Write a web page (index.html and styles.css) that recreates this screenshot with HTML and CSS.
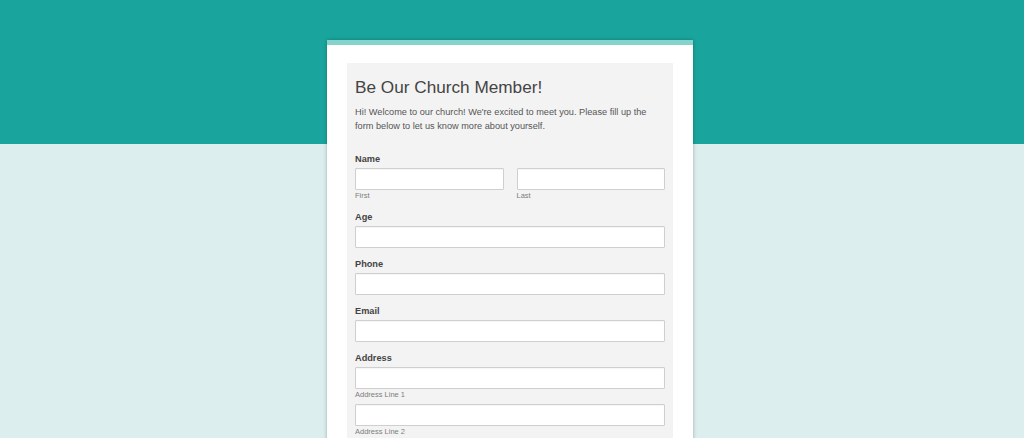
FILE: index.html
```html
<!DOCTYPE html>
<html>
<head>
<meta charset="utf-8">
<link rel="stylesheet" href="styles.css">
</head>
<body>
<div class="page">
  <div class="card">
    <form class="panel">
      <h1 class="title">Be Our Church Member!</h1>
      <p class="intro">Hi! Welcome to our church! We're excited to meet you. Please fill up the form below to let us know more about yourself.</p>

      <div class="field">
        <label class="label">Name</label>
        <div class="row">
          <div class="col">
            <input class="input" type="text">
            <span class="sub">First</span>
          </div>
          <div class="col">
            <input class="input" type="text">
            <span class="sub">Last</span>
          </div>
        </div>
      </div>

      <div class="field">
        <label class="label">Age</label>
        <input class="input" type="text">
      </div>

      <div class="field">
        <label class="label">Phone</label>
        <input class="input" type="text">
      </div>

      <div class="field">
        <label class="label">Email</label>
        <input class="input" type="text">
      </div>

      <div class="field">
        <label class="label">Address</label>
        <input class="input" type="text">
        <span class="sub">Address Line 1</span>
        <input class="input second" type="text">
        <span class="sub">Address Line 2</span>
      </div>
    </form>
  </div>
</div>
</body>
</html>
```
FILE: styles.css
```css
html, body {
  margin: 0;
  padding: 0;
  height: 100%;
  overflow: hidden;
}
body {
  font-family: "Liberation Sans", Arial, sans-serif;
  background: linear-gradient(to bottom, #19a59d 0, #19a59d 144px, #dcefee 144px, #dcefee 100%);
}
.page {
  width: 1020px;
  display: flex;
  justify-content: center;
  padding-top: 40px;
}
.card {
  width: 366px;
  background: #ffffff;
  border-top: 5px solid #86d3cc;
  box-shadow: 0 0 4px rgba(0, 0, 0, 0.28);
  padding: 18px 20px 40px;
  box-sizing: border-box;
  min-height: 500px;
}
.panel {
  background: #f3f3f3;
  padding: 14px 8px 20px 8px;
  display: flex;
  flex-direction: column;
}
.title {
  margin: 0;
  font-size: 17.2px;
  line-height: 20px;
  font-weight: normal;
  color: #444444;
}
.intro {
  margin: 8px 0 0;
  font-size: 9.2px;
  line-height: 14px;
  color: #555555;
}
.field {
  display: flex;
  flex-direction: column;
  margin-top: 9px;
}
.intro + .field {
  margin-top: 19px;
}
.label {
  font-size: 9.2px;
  line-height: 14px;
  font-weight: bold;
  color: #444444;
  margin-bottom: 2px;
}
.row {
  display: flex;
  gap: 13px;
}
.col {
  flex: 1;
  display: flex;
  flex-direction: column;
}
.input {
  display: block;
  width: 100%;
  height: 22px;
  box-sizing: border-box;
  margin: 0;
  border: 1px solid #cfcfcf;
  border-radius: 1px;
  background: #ffffff;
  box-shadow: inset 0 1px 1px rgba(0, 0, 0, 0.04);
  padding: 2px 4px;
  font: inherit;
}
.input.second {
  margin-top: 4px;
}
.sub {
  font-size: 7.5px;
  line-height: 11px;
  color: #7d7d7d;
}
```
